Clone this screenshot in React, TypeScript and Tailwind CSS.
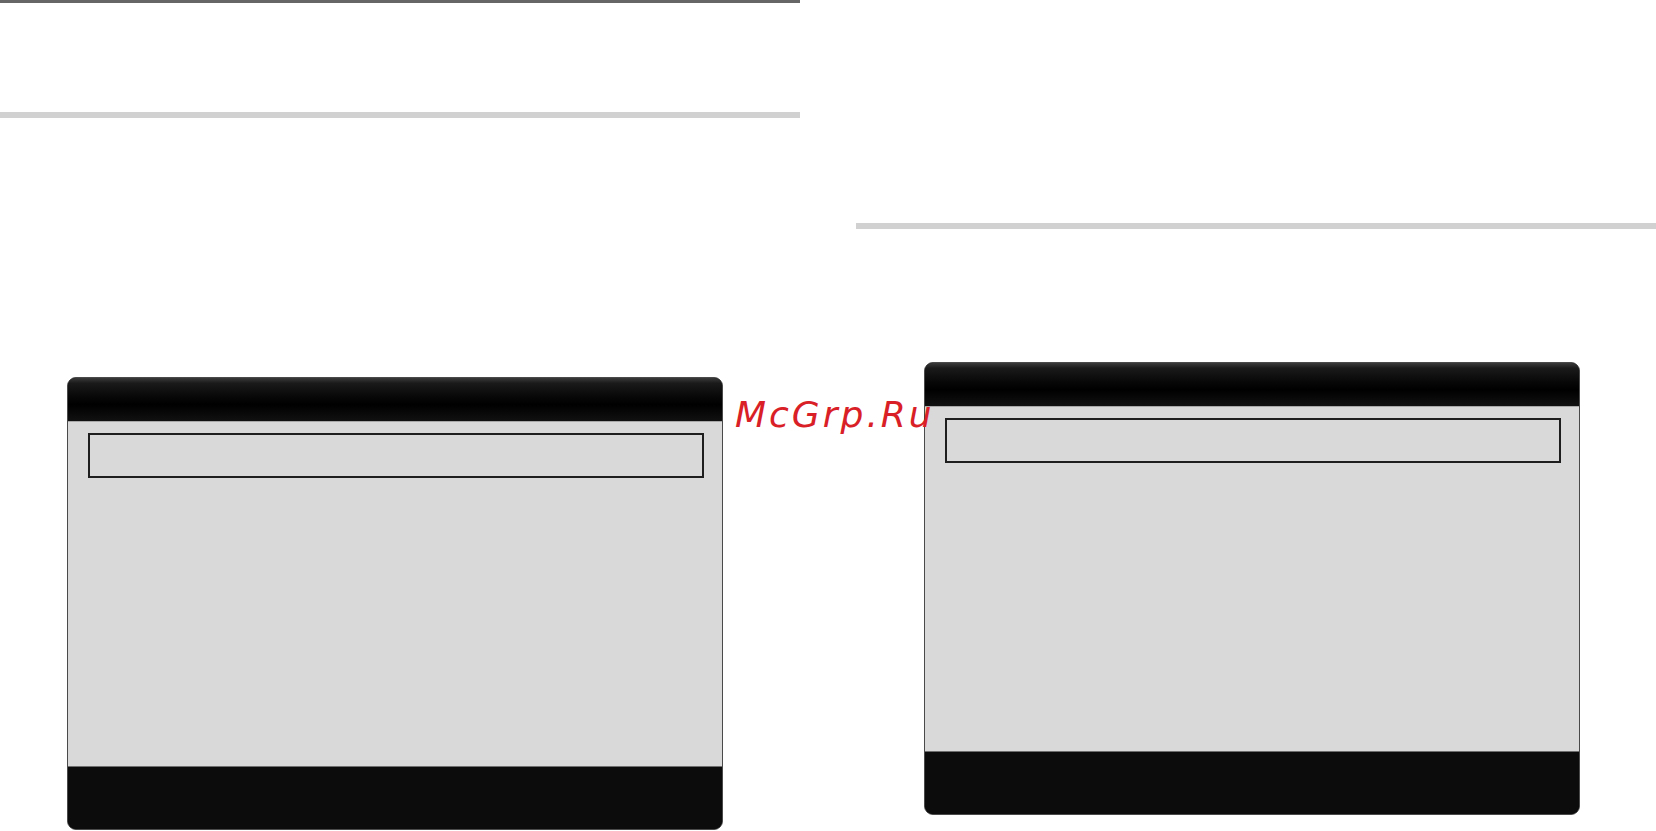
import React from "react";

function Panel() {
  return (
    <div className="w-[656px] h-[453px] rounded-[9px] border border-[#4a4a4a] overflow-hidden flex flex-col bg-[#0c0c0c]">
      <div className="h-[43px] shrink-0 bg-[linear-gradient(to_bottom,#3a3a3a_0%,#1a1a1a_12%,#070707_45%,#000000_62%,#111111_100%)]" />
      <div className="h-[346px] shrink-0 bg-[#d9d9d9] border-t border-[#a8a8a8] border-b border-b-[#6e6e6e] pt-[11px] pl-[20px] pr-[18px]">
        <div className="h-[45px] border-2 border-[#1e1e1e]" />
      </div>
      <div className="flex-1 bg-[#0c0c0c]" />
    </div>
  );
}

export default function App() {
  return (
    <div className="relative w-[1656px] h-[831px] bg-white overflow-hidden flex">
      <div className="w-[800px] shrink-0 flex flex-col">
        <div className="h-[3px] bg-[#666666]" />
        <div className="h-[109px]" />
        <div className="h-[6px] bg-[#d1d1d1]" />
        <div className="h-[259px]" />
        <div className="pl-[67px]">
          <Panel />
        </div>
      </div>
      <div className="w-[56px] shrink-0" />
      <div className="flex-1 flex flex-col">
        <div className="h-[223px]" />
        <div className="h-[6px] bg-[#d1d1d1]" />
        <div className="h-[133px]" />
        <div className="pl-[68px]">
          <Panel />
        </div>
      </div>
      <div className="absolute left-[735px] top-[395px] text-[36px] leading-[40px] italic tracking-[3px] text-[#d92027] font-['DejaVu_Sans',sans-serif]">
        McGrp.Ru
      </div>
    </div>
  );
}
